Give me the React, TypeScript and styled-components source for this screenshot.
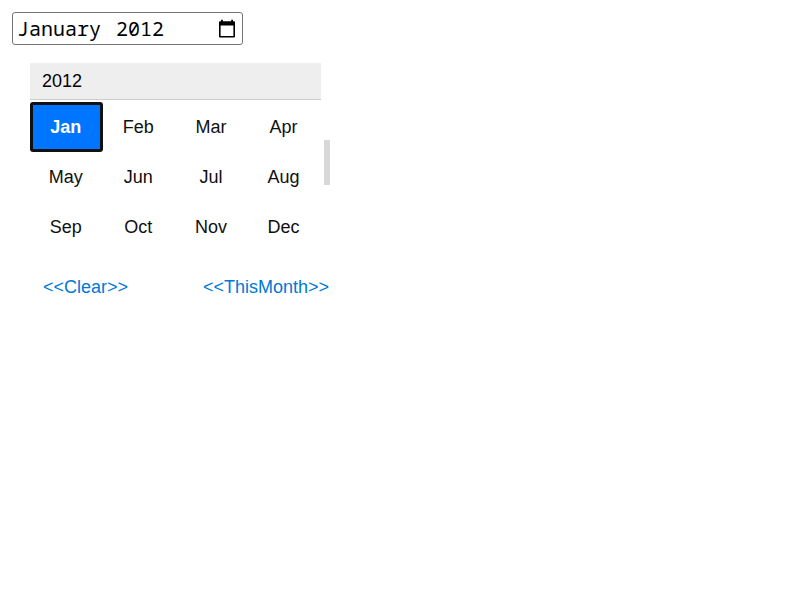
import React from 'react';
import styled, { createGlobalStyle } from 'styled-components';

const GlobalStyle = createGlobalStyle`
  * { box-sizing: border-box; }
  body {
    margin: 0;
    background: #fff;
    color: #101010;
    font-family: "Liberation Sans", Arial, sans-serif;
    font-size: 18px;
  }
`;

const Page = styled.main`
  padding: 12px;
`;

const MonthField = styled.div`
  display: flex;
  align-items: center;
  justify-content: space-between;
  width: 231px;
  height: 33px;
  padding: 0 5px 0 4px;
  border: 1px solid #767676;
  border-radius: 3px;
  color: #000;
`;

const FieldValue = styled.span`
  font-family: "Noto Sans Mono", "Noto Sans Mono CJK SC", "Liberation Mono", monospace;
  font-size: 20px;
  line-height: 30px;
  white-space: pre;
  word-spacing: 3px;
`;

const Picker = styled.section`
  width: 300px;
  margin: 18px 0 0 18px;
`;

const YearHeader = styled.div`
  width: 291px;
  height: 37px;
  padding-left: 12px;
  border-bottom: 1px solid #ccc;
  background: #eee;
  color: #000;
  line-height: 36px;
`;

const Body = styled.div`
  display: flex;
  gap: 3px;
  padding-top: 2px;
`;

const MonthGrid = styled.div`
  display: grid;
  grid-template-columns: repeat(4, 72.6px);
  grid-auto-rows: 50px;
  width: 291px;
`;

const Month = styled.button<{ $selected: boolean }>`
  width: 73px;
  height: 50px;
  padding: 0 1.5px 0 0;
  border: 3px solid ${p => (p.$selected ? '#101010' : 'transparent')};
  border-radius: 3px;
  background: ${p => (p.$selected ? '#0075ff' : 'transparent')};
  color: ${p => (p.$selected ? '#fff' : '#101010')};
  font: ${p => (p.$selected ? 'bold' : 'normal')} 18px "Liberation Sans", Arial, sans-serif;
`;

const ScrollThumb = styled.div`
  width: 6px;
  height: 45px;
  margin-top: 38px;
  background: #d8d8d8;
`;

const Actions = styled.div`
  display: flex;
  justify-content: space-between;
  width: 299px;
  margin-top: 24px;
  padding-left: 13px;
`;

const Action = styled.button`
  padding: 0;
  border: 0;
  background: none;
  color: #0078d7;
  font: 18px/22px "Liberation Sans", Arial, sans-serif;
`;

const months = ['Jan', 'Feb', 'Mar', 'Apr', 'May', 'Jun', 'Jul', 'Aug', 'Sep', 'Oct', 'Nov', 'Dec'];

const CalendarIcon = () => (
  <svg width="20" height="20" viewBox="0 0 20 20" fill="#000" aria-hidden="true">
    <path fillRule="evenodd" d="M4 .7h1.8v1.5h8.4V.7H16v1.5h1a1 1 0 0 1 1 1v14.4a1 1 0 0 1-1 1H3a1 1 0 0 1-1-1V3.2a1 1 0 0 1 1-1h1zM3.6 6.5v10.6h12.8V6.5z" />
  </svg>
);

export default function App() {
  return (
    <>
      <GlobalStyle />
      <Page>
        <MonthField>
          <FieldValue>January 2012</FieldValue>
          <CalendarIcon />
        </MonthField>
        <Picker>
          <YearHeader>2012</YearHeader>
          <Body>
            <MonthGrid>
              {months.map((month, i) => (
                <Month key={month} $selected={i === 0}>{month}</Month>
              ))}
            </MonthGrid>
            <ScrollThumb />
          </Body>
          <Actions>
            <Action>&lt;&lt;Clear&gt;&gt;</Action>
            <Action>&lt;&lt;ThisMonth&gt;&gt;</Action>
          </Actions>
        </Picker>
      </Page>
    </>
  );
}
